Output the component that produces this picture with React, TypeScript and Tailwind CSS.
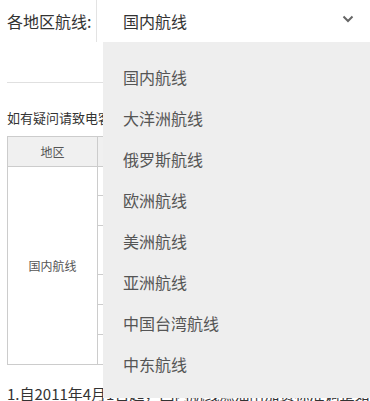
export default function App() {
  const routes = [
    "国内航线",
    "大洋洲航线",
    "俄罗斯航线",
    "欧洲航线",
    "美洲航线",
    "亚洲航线",
    "中国台湾航线",
    "中东航线",
  ];
  const rows = [29, 30, 49, 30, 30, 30];

  return (
    <div
      className="relative w-[370px] h-[401px] overflow-hidden bg-white text-[#333]"
      style={{ fontFamily: '"Noto Sans CJK SC", "Noto Sans", sans-serif' }}
    >
      {/* region selector */}
      <div className="flex items-center h-[42px]">
        <label className="pl-[7px] w-[96px] shrink-0 text-[16px] leading-[40px]">各地区航线:</label>
        <div className="flex-1 h-[42px] flex items-center justify-between border-l border-[#e3e3e3] pl-[26px] pr-[15px] text-[16px]">
          <span className="leading-[40px]">国内航线</span>
          <svg width="12" height="8" viewBox="0 0 12 8" className="mr-[1px] mb-[4px]">
            <polyline points="1.5,1.5 6,6 10.5,1.5" fill="none" stroke="#666" strokeWidth="2" />
          </svg>
        </div>
      </div>

      <div className="pl-[7px]">
        <div className="mt-[40px] w-[500px] border-t border-[#e0e0e0]" />
        <p className="mt-[26px] text-[13px] leading-[18px] whitespace-nowrap">
          如有疑问请致电客服热线95583咨询。
        </p>
        <table className="mt-[9px] w-[520px] border-collapse text-[12px] text-[#555]">
          <thead>
            <tr className="h-[30px] bg-[#f0f0f0]">
              <th className="w-[90px] border border-[#ccc] font-normal">地区</th>
              <th className="border border-[#ccc] font-normal">航线</th>
            </tr>
          </thead>
          <tbody>
            {rows.map((h, i) => (
              <tr key={i} style={{ height: h }}>
                {i === 0 && (
                  <td rowSpan={rows.length} className="border border-[#ccc] text-center">
                    国内航线
                  </td>
                )}
                <td className="border border-[#ccc]" />
              </tr>
            ))}
          </tbody>
        </table>
        <p className="mt-[19px] text-[15px] leading-[20px] whitespace-nowrap">
          1.自2011年4月1日起，国内航线燃油附加费标准调整如下。
        </p>
      </div>

      {/* open dropdown */}
      <ul className="absolute left-[103px] top-[42px] w-[267px] bg-[#eeeeee] pt-[14px] pb-[14px]">
        {routes.map((r) => (
          <li key={r} className="h-[41px] flex items-center pl-[20px] text-[16px] text-[#555]">
            {r}
          </li>
        ))}
      </ul>
    </div>
  );
}
